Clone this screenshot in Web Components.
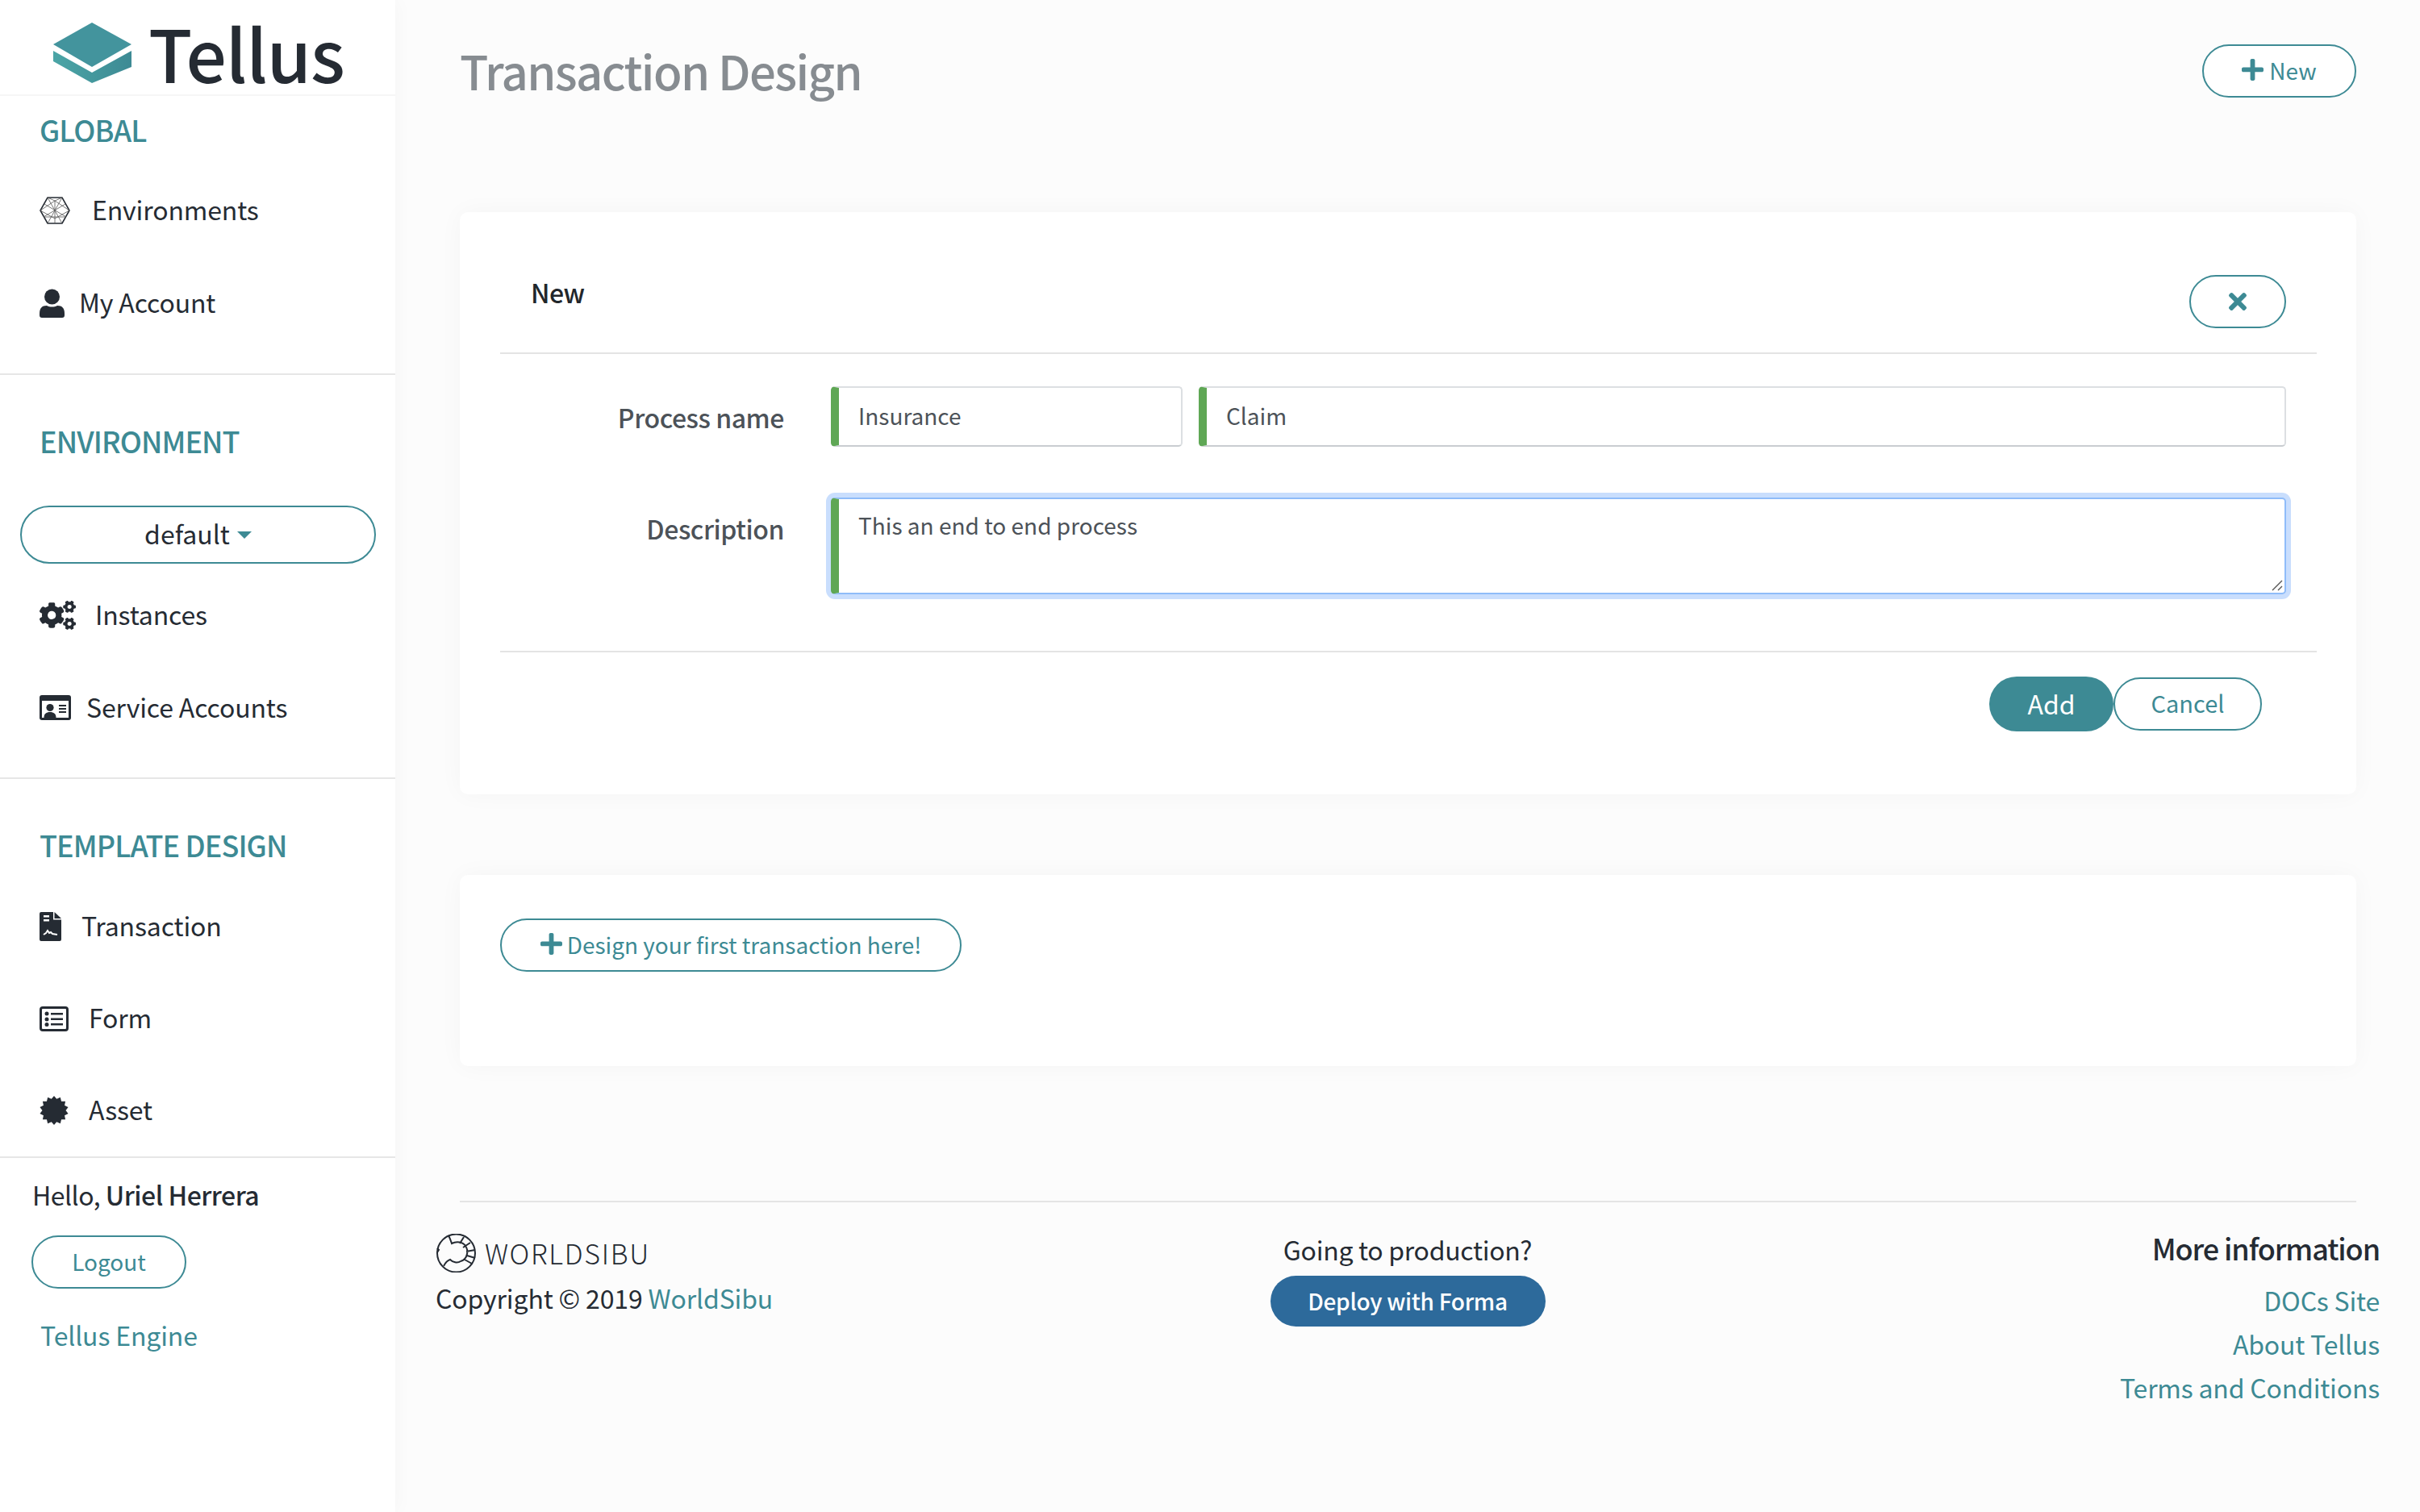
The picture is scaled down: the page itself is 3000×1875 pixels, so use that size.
<!DOCTYPE html>
<html lang="en"><head><meta charset="utf-8"><title>Tellus</title>
<style>
html,body{margin:0;padding:0;background:#fcfcfc}
body{font-family:"Noto Sans CJK SC","Noto Sans CJK JP","Open Sans",sans-serif;color:#252b33;font-size:32px;line-height:1.2;width:3000px;height:1875px;overflow:hidden}
svg{display:block}
</style></head><body>
<tl-app>
  <tl-sidebar slot="side">
    <tl-logo></tl-logo>
    <tl-nav-section label="GLOBAL" head="84" head-top="19" pad-bottom="30">
      <tl-nav-item gap="27"><svg slot="icon" width="38" height="34" viewBox="0 0 38 34" fill="none" stroke="#252b33"><path stroke-width="1.6" d="M10 1h18l9 16-9 16H10L1 17z"/><path stroke-width=".8" stroke="#555" d="M10 1l18 32M28 1L10 33M1 17l18-12 18 12M1 17l18 10 18-10M5 25h28M19 5v28M10 1l9 4 9-4M6 9l27 16M32 9L5 25"/></svg>Environments</tl-nav-item>
      <tl-nav-item gap="18"><svg slot="icon" width="31" height="36" viewBox="0 0 31 36" fill="#252b33"><circle cx="15.500" cy="10" r="9.500"/><path d="M0 31c0-7 3-10 9-10 2 1 4 1.500 6.500 1.500s4.500-.5 6.500-1.500c6 0 9 3 9 10v2a3 3 0 0 1-3 3H3a3 3 0 0 1-3-3z"/></svg>My Account</tl-nav-item>
    </tl-nav-section>
    <tl-nav-section label="ENVIRONMENT" head="162" head-top="59" pad-bottom="29">
      <tl-env-select>default</tl-env-select>
      <tl-nav-item gap="24"><svg slot="icon" width="45" height="36" viewBox="0 0 640 512" fill="#252b33"><path d="M512.1 191l-8.2 14.3c-3 5.3-9.4 7.5-15.1 5.4-11.8-4.4-22.6-10.7-32.1-18.6-4.6-3.8-5.8-10.5-2.8-15.7l8.2-14.3c-6.9-8-12.3-17.3-15.9-27.4h-16.5c-6 0-11.2-4.3-12.2-10.3-2-12-2.1-24.6 0-37.1 1-6 6.2-10.4 12.2-10.4h16.5c3.6-10.1 9-19.4 15.9-27.4l-8.2-14.3c-3-5.2-1.9-11.9 2.8-15.7 9.5-7.9 20.4-14.2 32.1-18.6 5.7-2.1 12.1.1 15.1 5.4l8.2 14.3c10.5-1.9 21.2-1.9 31.7 0L552 6.3c3-5.3 9.4-7.5 15.1-5.4 11.8 4.4 22.6 10.7 32.1 18.6 4.6 3.8 5.8 10.5 2.8 15.7l-8.2 14.3c6.9 8 12.3 17.3 15.9 27.4h16.5c6 0 11.2 4.3 12.2 10.3 2 12 2.1 24.6 0 37.1-1 6-6.2 10.4-12.2 10.4h-16.5c-3.6 10.1-9 19.4-15.9 27.4l8.2 14.3c3 5.2 1.9 11.9-2.8 15.7-9.5 7.9-20.4 14.2-32.1 18.6-5.7 2.1-12.1-.1-15.1-5.4l-8.2-14.3c-10.4 1.9-21.2 1.9-31.7 0zm-10.5-58.8c38.5 29.6 82.4-14.3 52.8-52.8-38.5-29.7-82.4 14.3-52.8 52.8zM386.3 286.1l33.7 16.8c10.1 5.8 14.5 18.1 10.5 29.1-8.9 24.2-26.4 46.4-42.6 65.8-7.4 8.9-20.2 11.1-30.3 5.3l-29.1-16.8c-16 13.7-34.6 24.6-54.9 31.7v33.6c0 11.6-8.3 21.6-19.7 23.6-24.6 4.2-50.4 4.4-75.9 0-11.5-2-20-11.9-20-23.6V418c-20.3-7.2-38.9-18-54.9-31.7L74 403c-10 5.8-22.9 3.6-30.3-5.3-16.2-19.4-33.3-41.6-42.2-65.7-4-10.9.4-23.2 10.5-29.1l33.3-16.8c-3.9-20.9-3.9-42.4 0-63.4L12 205.8c-10.1-5.8-14.6-18.1-10.5-29 8.9-24.2 26-46.4 42.2-65.8 7.4-8.9 20.2-11.1 30.3-5.3l29.1 16.8c16-13.7 34.6-24.6 54.9-31.7V57.1c0-11.5 8.2-21.5 19.6-23.5 24.6-4.2 50.5-4.4 76-.1 11.5 2 20 11.9 20 23.6v33.6c20.3 7.2 38.9 18 54.9 31.7l29.1-16.8c10-5.8 22.9-3.6 30.3 5.3 16.2 19.4 33.2 41.6 42.1 65.8 4 10.9.1 23.2-10 29.1l-33.7 16.8c3.9 21 3.9 42.5 0 63.5zm-117.6 21.1c59.2-77-28.7-164.9-105.7-105.7-59.2 77 28.7 164.9 105.7 105.7zm243.4 182.7l-8.2 14.3c-3 5.3-9.4 7.5-15.1 5.4-11.8-4.4-22.6-10.7-32.1-18.6-4.6-3.8-5.8-10.5-2.8-15.7l8.2-14.3c-6.9-8-12.3-17.3-15.9-27.4h-16.5c-6 0-11.2-4.3-12.2-10.3-2-12-2.1-24.6 0-37.1 1-6 6.2-10.4 12.2-10.4h16.5c3.6-10.1 9-19.4 15.9-27.4l-8.2-14.3c-3-5.2-1.9-11.9 2.8-15.7 9.5-7.9 20.4-14.2 32.1-18.6 5.7-2.1 12.1.1 15.1 5.4l8.2 14.3c10.5-1.9 21.2-1.9 31.7 0l8.2-14.3c3-5.3 9.4-7.5 15.1-5.4 11.8 4.4 22.6 10.7 32.1 18.6 4.6 3.8 5.8 10.5 2.8 15.7l-8.2 14.3c6.9 8 12.3 17.3 15.9 27.4h16.5c6 0 11.2 4.3 12.2 10.3 2 12 2.1 24.6 0 37.1-1 6-6.2 10.4-12.2 10.4h-16.5c-3.6 10.1-9 19.4-15.9 27.4l8.2 14.3c3 5.2 1.9 11.9-2.8 15.7-9.5 7.9-20.4 14.2-32.1 18.6-5.7 2.1-12.1-.1-15.1-5.4l-8.2-14.3c-10.4 1.9-21.2 1.9-31.7 0zM501.6 431c38.5 29.6 82.4-14.3 52.8-52.8-38.5-29.6-82.4 14.3-52.8 52.8z"/></svg>Instances</tl-nav-item>
      <tl-nav-item gap="19"><svg slot="icon" width="39" height="31" viewBox="0 0 39 31"><path fill="#252b33" d="M3 0h33a3 3 0 0 1 3 3v25a3 3 0 0 1-3 3H3a3 3 0 0 1-3-3V3a3 3 0 0 1 3-3z"/><rect x="3" y="7" width="33" height="21" fill="#fff"/><circle cx="13" cy="15.500" r="4.600" fill="#252b33"/><path fill="#252b33" d="M5.500 28c0-5 3-7 7.500-7s7.500 2 7.500 7z"/><path fill="#252b33" d="M24 12h9v2h-9zM24 16h9v2h-9zM24 20h9v2h-9z"/></svg>Service Accounts</tl-nav-item>
    </tl-nav-section>
    <tl-nav-section label="TEMPLATE DESIGN" head="126" head-top="59" pad-bottom="0" style="--item-h:114px">
      <tl-nav-item gap="25"><svg slot="icon" width="27" height="36" viewBox="0 0 27 36"><path fill="#252b33" d="M2 0h15v9.500h10V34a2 2 0 0 1-2 2H2a2 2 0 0 1-2-2V2a2 2 0 0 1 2-2zM18.500 0L27 8h-8.500z"/><path fill="#fff" d="M5 4h7v2.500H5zM5 9h7v2.500H5z"/><path fill="none" stroke="#fff" stroke-width="2" d="M5 28l3-2 2-3 2 3 2-1 2 2 6 1"/></svg>Transaction</tl-nav-item>
      <tl-nav-item gap="25"><svg slot="icon" width="36" height="31" viewBox="0 0 36 31"><rect x="1.500" y="1.500" width="33" height="28" rx="2.500" fill="#fff" stroke="#252b33" stroke-width="3"/><circle cx="9" cy="9" r="2.500" fill="#252b33"/><circle cx="9" cy="16" r="2.500" fill="#252b33"/><circle cx="9" cy="22.500" r="2.500" fill="#252b33"/><path fill="#252b33" d="M14 8h15v2.500H14zM14 14.500h15V17H14zM14 21h15v2.500H14z"/></svg>Form</tl-nav-item>
      <tl-nav-item gap="25"><svg slot="icon" id="burst" width="36" height="36" viewBox="-18 -18 36 36"><polygon fill="#252b33" points=""/></svg>Asset</tl-nav-item>
    </tl-nav-section>
    <tl-user-box></tl-user-box>
  </tl-sidebar>
  <tl-main slot="main">
    <tl-page-head>Transaction Design</tl-page-head>
    <tl-card style="height:722px">
      <tl-card-head>New</tl-card-head>
      <tl-form-row label="Process name" style="--top:40px">
        <tl-text-field style="width:436px">Insurance</tl-text-field>
        <tl-text-field style="flex:1">Claim</tl-text-field>
      </tl-form-row>
      <tl-form-row label="Description" style="--top:62px">
        <tl-text-field focus style="flex:1;height:120px">This an end to end process</tl-text-field>
      </tl-form-row>
      <tl-card-actions></tl-card-actions>
    </tl-card>
    <tl-card style="height:237px;margin-top:100px">
      <tl-empty-cta></tl-empty-cta>
    </tl-card>
    <tl-footer></tl-footer>
  </tl-main>
</tl-app>
<script>
const TEAL='#3d8a94';
function comp(name,html){
  customElements.define(name,class extends HTMLElement{
    constructor(){super();const r=this.attachShadow({mode:'open'});r.innerHTML=typeof html==='function'?html(this):html;}
  });
}
const plus=(s,c=TEAL)=>`<svg width="${s}" height="${s*512/448}" viewBox="0 0 448 512" fill="${c}"><path d="M416 208H272V64c0-17.67-14.33-32-32-32h-32c-17.67 0-32 14.33-32 32v144H32c-17.67 0-32 14.33-32 32v32c0 17.67 14.33 32 32 32h144v144c0 17.67 14.33 32 32 32h32c17.67 0 32-14.33 32-32V304h144c17.67 0 32-14.33 32-32v-32c0-17.67-14.33-32-32-32z"/></svg>`;
const btnCss=`.btn{box-sizing:border-box;display:inline-flex;align-items:center;justify-content:center;border:2px solid ${TEAL};border-radius:34px;background:#fff;color:${TEAL};font-size:28px;line-height:1;white-space:nowrap;padding-bottom:3px}.btn svg{margin-top:-1px}`;

comp('tl-app',`<style>:host{display:flex;width:3000px;height:1875px}
::slotted([slot=side]){flex:0 0 490px}::slotted([slot=main]){flex:1;min-width:0}</style><slot name="side"></slot><slot name="main"></slot>`);

comp('tl-sidebar',`<style>:host{display:block;background:#fff;box-shadow:0 0 24px rgba(0,0,0,.035);height:1875px;position:relative}</style><slot></slot>`);

comp('tl-logo',`<style>:host{display:flex;box-sizing:border-box;height:119px;border-bottom:2px solid #f6f6f6;padding:28px 0 0 66px;gap:20px;align-items:flex-start}
span{font-size:89px;font-weight:500;line-height:74px;color:#252b33;letter-spacing:-1px}</style>
<svg width="98" height="76" viewBox="0 0 98 76"><defs><linearGradient id="a" x1="0" x2="1"><stop offset="0" stop-color="#4ba5a6"/><stop offset="1" stop-color="#3d8a94"/></linearGradient></defs>
<path fill="#43949d" d="M48 0l49 27-49 28L0 27z"/><path fill="url(#a)" d="M0 35l48 27 49-27v20L48 75 0 48z"/></svg><span>Tellus</span>`);

comp('tl-nav-section',h=>`<style>:host{display:block;border-bottom:2px solid #e6e6e6;padding-bottom:${h.getAttribute('pad-bottom')}px}
h2{margin:0;height:${h.getAttribute('head')}px;box-sizing:border-box;padding:${h.getAttribute('head-top')}px 0 0 49px;font-size:36px;font-weight:500;color:${TEAL};line-height:44px;letter-spacing:-.9px}</style><h2>${h.getAttribute('label')}</h2><slot></slot>`);

comp('tl-nav-item',h=>`<style>:host{display:flex;align-items:center;height:var(--item-h,115px);padding-left:49px;font-size:32px;color:#252b33;line-height:1;letter-spacing:-.15px;gap:${h.getAttribute('gap')}px}span{margin-top:-4px}</style><slot name="icon"></slot><span><slot></slot></span>`);

comp('tl-env-select',`<style>:host{display:flex;align-items:center;justify-content:center;box-sizing:border-box;width:441px;height:72px;margin:0 0 6px 25px;border:2px solid ${TEAL};border-radius:36px;font-size:32px;color:#252b33;gap:9px}
span{margin-top:-3px}i{width:0;height:0;border:9px solid transparent;border-top-color:${TEAL};border-bottom:0;margin-top:0}</style><span><slot></slot></span><i></i>`);

comp('tl-user-box',`<style>:host{display:block;padding:23px 0 0 40px;font-size:32px;line-height:44px}
b{font-weight:500}.who{letter-spacing:-.5px}.btn{width:192px;height:66px;margin-top:29px;margin-left:-1px}a{display:block;color:${TEAL};margin:35px 0 0 10px;letter-spacing:-.15px}${btnCss}</style>
<div class="who">Hello, <b>Uriel Herrera</b></div><div class="btn">Logout</div><a>Tellus Engine</a>`);

comp('tl-main',`<style>:host{display:block;box-sizing:border-box;padding:0 79px 0 80px}</style><slot></slot>`);

comp('tl-page-head',`<style>:host{display:flex;justify-content:space-between;align-items:flex-start;height:263px}
h1{margin:54px 0 0;font-size:58px;font-weight:500;line-height:66px;color:#878c91;letter-spacing:-1.600px}
.btn{width:191px;height:66px;margin-top:55px;gap:7px}${btnCss}</style><h1><slot></slot></h1><div class="btn">${plus(27)}<span>New</span></div>`);

comp('tl-card',`<style>:host{display:block;box-sizing:border-box;background:#fff;border-radius:10px;box-shadow:0 0 30px rgba(0,0,0,.035);padding:0 49px 0 50px}</style><slot></slot>`);

comp('tl-card-head',`<style>${btnCss}:host{display:flex;box-sizing:border-box;height:176px;border-bottom:2px solid #e4e4e4;padding:0 38px 0 38px;justify-content:space-between}
span{font-size:32px;font-weight:500;line-height:40px;margin-top:79px;color:#21262b;letter-spacing:-.5px}
.btn{width:120px;height:66px;margin-top:78px;padding:0}</style><span><slot></slot></span><div class="btn"><svg width="22" height="32" viewBox="0 0 352 512" fill="${TEAL}"><path d="M242.72 256l100.07-100.07c12.28-12.28 12.28-32.19 0-44.48l-22.24-22.24c-12.28-12.28-32.19-12.28-44.48 0L176 189.28 75.93 89.21c-12.28-12.28-32.19-12.28-44.48 0L9.21 111.45c-12.28 12.28-12.28 32.19 0 44.48L109.28 256 9.21 356.07c-12.28 12.28-12.28 32.19 0 44.48l22.24 22.24c12.28 12.28 32.2 12.28 44.48 0L176 322.72l100.07 100.07c12.28 12.28 32.2 12.28 44.48 0l22.24-22.24c12.28-12.28 12.28-32.19 0-44.48L242.72 256z"/></svg></div>`);

comp('tl-form-row',h=>`<style>:host{display:flex;margin-top:var(--top);padding-right:38px}
label{flex:0 0 352px;box-sizing:border-box;text-align:right;font-size:32px;font-weight:500;color:#4c5258;line-height:76px;height:76px;letter-spacing:-.45px}
div{flex:1;display:flex;gap:20px;margin-left:58px}</style><label>${h.getAttribute('label')}</label><div><slot></slot></div>`);

comp('tl-text-field',h=>`<style>:host{display:block;position:relative;box-sizing:border-box;height:75px;background:#fff;border:2px solid ${h.hasAttribute('focus')?'#8fbcf9':'#dcdfe2'};${h.hasAttribute('focus')?'':'border-bottom-color:#c9cdd1;'}border-left:10px solid #5fa755;border-radius:5px;padding-left:24px;font-size:28px;color:#4c5258;line-height:${h.hasAttribute('focus')?'36px':'69px'};${h.hasAttribute('focus')?'padding-top:14px;box-shadow:0 0 0 6px #c9defd;':''}}
svg{position:absolute;right:2px;bottom:2px}</style><slot></slot>${h.hasAttribute('focus')?'<svg width="14" height="14" viewBox="0 0 14 14" stroke="#555" stroke-width="1.400"><path d="M1 13L13 1M8 13l5-5"/></svg>':''}`);

comp('tl-card-actions',`<style>${btnCss}:host{display:flex;justify-content:flex-end;box-sizing:border-box;margin-top:70px;border-top:2px solid #e4e4e4;padding:30px 68px 0 0;align-items:center;height:100px}
.btn{height:66px;width:184px;font-size:29px}.btn.add{background:${TEAL};border:0;color:#fff;font-size:32px;width:154px;height:68px;border-radius:34px}</style>
<div class="btn add">Add</div><div class="btn">Cancel</div>`);

comp('tl-empty-cta',`<style>:host{display:block;padding-top:54px}.btn{width:572px;height:66px;gap:6px}${btnCss}</style><div class="btn">${plus(27)}<span>Design your first transaction here!</span></div>`);

comp('tl-footer',`<style>:host{display:flex;position:relative;justify-content:space-between;margin:167px -29px 0 -30px;height:300px;font-size:32px;line-height:44px}
:host::before{content:"";position:absolute;left:30px;right:29px;top:0;height:2px;background:#e4e4e4}
.l{padding-top:41px;width:500px}.brand{display:flex;align-items:center;gap:10px;height:48px}.brand span{font-size:34px;font-weight:300;letter-spacing:1.700px;line-height:48px}
.copy{margin-top:9px;letter-spacing:-.15px;white-space:nowrap}a{color:${TEAL}}
.c{padding-top:38px;text-align:center;display:flex;flex-direction:column;align-items:center;letter-spacing:-.3px}
.d{display:flex;align-items:center;justify-content:center;width:341px;height:63px;border-radius:32px;background:#2d6a9b;color:#fff;font-size:28px;margin-top:11px;font-weight:500;padding-bottom:1px;box-sizing:border-box}
.r{padding-top:34px;text-align:right;width:500px;letter-spacing:-.2px}.r h3{margin:0 0 14px;font-size:36px;font-weight:500;line-height:48px;letter-spacing:-1.100px}.r a{display:block;height:54px;line-height:54px}</style>
<div class="l"><div class="brand"><svg width="51" height="48" viewBox="0 0 51 48" fill="none" stroke="#252b33" stroke-width="2"><circle cx="25.500" cy="24" r="23.500"/><path d="M16 2c2 4 3 7 4 10 6-3 14-2 17 3 2 3 3 6 2 10-1 5-4 8-8 9M30 12l5-8M34 17l9-6M38 22l11-2M39 27l10 3M36 32l9 5M10 40c2-4 5-7 8-8 3 3 9 5 13 2M2 18l2 2-2 3"/></svg><span>WORLDSIBU</span></div><div class="copy">Copyright © 2019 <a>WorldSibu</a></div></div>
<div class="c"><span>Going to production?</span><div class="d">Deploy with Forma</div></div>
<div class="r"><h3>More information</h3><a>DOCs Site</a><a>About Tellus</a><a>Terms and Conditions</a></div>`);

let pts=[];for(let i=0;i<28;i++){const r=i%2?14.5:18,a=i*Math.PI/14;pts.push((r*Math.sin(a)).toFixed(2)+','+(-r*Math.cos(a)).toFixed(2));}
document.querySelector('#burst polygon').setAttribute('points',pts.join(' '));
</script>
</body></html>
